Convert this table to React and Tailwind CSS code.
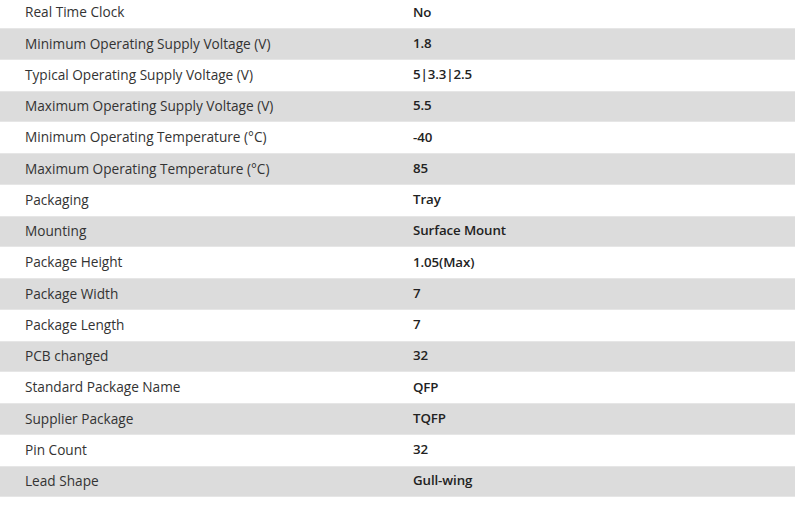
const rows = [
  ['Real Time Clock', 'No'],
  ['Minimum Operating Supply Voltage (V)', '1.8'],
  ['Typical Operating Supply Voltage (V)', '5|3.3|2.5'],
  ['Maximum Operating Supply Voltage (V)', '5.5'],
  ['Minimum Operating Temperature (°C)', '-40'],
  ['Maximum Operating Temperature (°C)', '85'],
  ['Packaging', 'Tray'],
  ['Mounting', 'Surface Mount'],
  ['Package Height', '1.05(Max)'],
  ['Package Width', '7'],
  ['Package Length', '7'],
  ['PCB changed', '32'],
  ['Standard Package Name', 'QFP'],
  ['Supplier Package', 'TQFP'],
  ['Pin Count', '32'],
  ['Lead Shape', 'Gull-wing'],
]

export default function App() {
  return (
    <div className="h-[508px] w-[795px] overflow-hidden bg-white font-['Open_Sans',sans-serif]">
      <div className="-mt-[3px]">
        {rows.map(([label, value], i) => (
          <div
            key={label}
            className={
              i % 2 === 1
                ? 'flex h-[31.25px] items-center border-y border-[#e6e6e6] bg-[#dcdcdc]'
                : 'flex h-[31.25px] items-center bg-white'
            }
          >
            <div className="w-[413px] pl-[25px] text-[13.65px] text-[#333333]">{label}</div>
            <div className="text-[13.3px] font-semibold tracking-[-0.1px] text-[#222222]">{value}</div>
          </div>
        ))}
      </div>
    </div>
  )
}
